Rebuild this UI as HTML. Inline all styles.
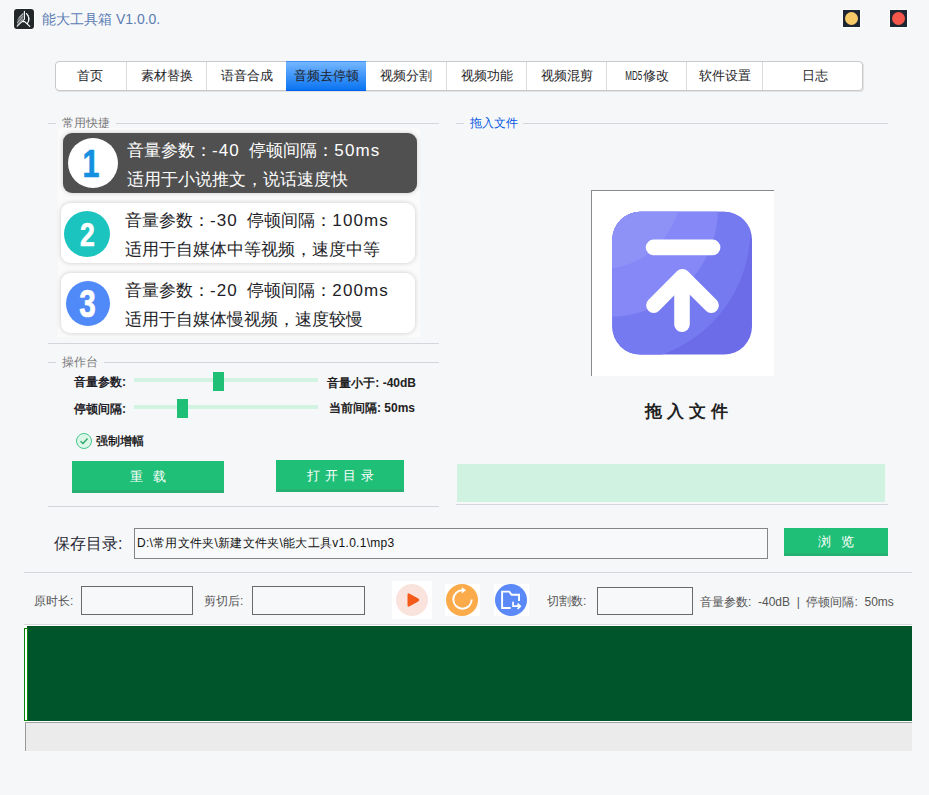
<!DOCTYPE html>
<html><head><meta charset="utf-8">
<style>
*{margin:0;padding:0;box-sizing:border-box}
html,body{width:929px;height:795px;overflow:hidden;background:#f6f7f9;font-family:"Liberation Sans",sans-serif;color:#1e1e28}
.a{position:absolute;white-space:nowrap}
.logo{left:14px;top:9px;width:20px;height:20px;background:#22282a;border-radius:3px;box-shadow:0 0 0 1px #fff}
.title{left:42px;top:10px;font-size:14px;line-height:18px;color:#5b7db3}
.wbtn{top:10px;width:17px;height:17px;background:#1e2634;box-shadow:0 0 0 1px #fff}
.wbtn i{position:absolute;left:2px;top:2px;width:13px;height:13px;border-radius:50%}
.tabs{left:55px;top:61px;width:808px;height:30px;background:#fff;border:1px solid #c9c9c9;border-radius:4px;overflow:hidden;box-shadow:1px 1px 0 #e2e2e2}
.tab{position:absolute;top:0;height:28px;font-size:13px;line-height:28px;text-align:center;border-left:1px solid #dcdcdc}
.tab.act{background:linear-gradient(#72b4ff,#0b73ef);border-left:none}
.sec{height:1px;background:#d3d6dd}
.sl{font-size:12px;line-height:14px;color:#7a7a7a;background:#f6f7f9;padding:0 6px}
.cards{left:58px;top:128px;width:362px;height:209px;background:#fbfbfb}
.card{position:absolute;width:354px;height:60px;border-radius:9px;background:#fff;box-shadow:0 0 5px rgba(0,0,0,.2)}
.card .c{position:absolute;border-radius:50%;text-align:center;font-weight:bold;color:#fff}
.card .t{position:absolute;font-size:17px;line-height:20px;white-space:nowrap}
.card .c b{display:inline-block;transform:scaleX(.78);-webkit-text-stroke:.7px currentColor}
.L{letter-spacing:1.1px}
.btn{background:#20bf78;color:#fff;font-size:13px;line-height:31px;text-align:center;box-shadow:inset 0 -3px 0 #27b073}
.lab{font-size:12px;line-height:14px;color:#555}
.box{height:28px;border:1px solid #6a6a6a;background:#f7f8fa}
</style></head><body>
<div class="a logo"></div>
<svg class="a" style="left:14px;top:9px" width="20" height="20" viewBox="0 0 20 20" fill="none" stroke="#fff" stroke-linecap="round">
  <path d="M10.4 2.2 V10.3 L3.2 17.2" stroke-width="1.1"/>
  <path d="M8.6 12.6 H10.6 L15.8 17.4" stroke-width="1.1"/>
  <path d="M4 10.2 L9 5.2 M3.6 12 L9 6.8 M3.4 13.6 L9 8.4 M3.6 15 L8.6 10.2 M5.2 8.2 L9 4.4" stroke-width=".8" opacity=".85"/>
  <path d="M12.4 4.5 Q16.6 8.6 13.4 14.6" stroke-width="1.1"/>
  <path d="M14.2 6.2 Q16.4 9.6 14.6 13" stroke-width=".7" opacity=".8"/>
</svg>
<div class="a title">能大工具箱 V1.0.0.</div>
<div class="a wbtn" style="left:843px"><i style="background:#f9cb68"></i></div>
<div class="a wbtn" style="left:890px"><i style="background:#f4574a"></i></div>

<div class="a tabs">
  <div class="tab" style="left:0;width:70px;border-left:none;text-indent:-2px">首页</div>
  <div class="tab" style="left:70px;width:80px">素材替换</div>
  <div class="tab" style="left:150px;width:80px">语音合成</div>
  
  <div class="tab" style="left:310px;width:80px;border-left:none">视频分割</div>
  <div class="tab" style="left:390px;width:80px">视频功能</div>
  <div class="tab" style="left:470px;width:80px">视频混剪</div>
  <div class="tab" style="left:550px;width:80px"><span style="display:inline-block;transform:scaleX(.62);margin:0 -5px 0 -4px">MD5</span>修改</div>
  <div class="tab" style="left:630px;width:76px">软件设置</div>
  <div class="tab" style="left:706px;width:101px;text-indent:3px">日志</div>
</div>

<div class="a" style="left:286px;top:61px;width:80px;height:30px;background:linear-gradient(#74b6ff,#0a74f2);border-top:1px solid #3b90f8;border-bottom:1px solid #0060ee;font-size:13px;line-height:28px;text-align:center">音频去停顿</div>
<!-- left section: 常用快捷 -->
<div class="a sec" style="left:48px;top:123px;width:391px"></div>
<div class="a sl" style="left:56px;top:116px">常用快捷</div>
<div class="a cards"></div>
<div class="a card" style="left:63px;top:133px;background:#505050;color:#fff">
  <div class="c" style="left:5px;top:5px;width:50px;height:50px;background:#fff;color:#1590e0;font-size:39px;line-height:52px;text-indent:-2px"><b>1</b></div>
  <div class="t" style="left:64px;top:8px">音量参数：<span class="L">-40</span>&nbsp; 停顿间隔：<span class="L">50ms</span></div>
  <div class="t" style="left:64px;top:37px">适用于小说推文，说话速度快</div>
</div>
<div class="a card" style="left:61px;top:203px">
  <div class="c" style="left:3px;top:8px;width:46px;height:46px;background:#1cc4bf;font-size:34px;line-height:46px"><b>2</b></div>
  <div class="t" style="left:64px;top:8px">音量参数：<span class="L">-30</span>&nbsp; 停顿间隔：<span class="L">100ms</span></div>
  <div class="t" style="left:64px;top:37px">适用于自媒体中等视频，速度中等</div>
</div>
<div class="a card" style="left:61px;top:273px">
  <div class="c" style="left:5px;top:8px;width:44px;height:45px;background:#4f8af8;font-size:38px;line-height:46px"><b>3</b></div>
  <div class="t" style="left:64px;top:8px">音量参数：<span class="L">-20</span>&nbsp; 停顿间隔：<span class="L">200ms</span></div>
  <div class="t" style="left:64px;top:37px">适用于自媒体慢视频，速度较慢</div>
</div>
<div class="a sec" style="left:48px;top:343px;width:391px"></div>

<!-- 操作台 -->
<div class="a sec" style="left:48px;top:362px;width:391px"></div>
<div class="a sl" style="left:56px;top:355px">操作台</div>
<div class="a" style="left:74px;top:375px;font-size:12px;line-height:14px;font-weight:bold">音量参数:</div>
<div class="a" style="left:134px;top:378px;width:184px;height:4px;background:#d2f2e2"></div>
<div class="a" style="left:213px;top:372px;width:11px;height:19px;background:#1fbf75"></div>
<div class="a" style="right:513px;top:376px;font-size:12px;line-height:14px;font-weight:bold;color:#222">音量小于: -40dB</div>
<div class="a" style="left:74px;top:402px;font-size:12px;line-height:14px;font-weight:bold">停顿间隔:</div>
<div class="a" style="left:134px;top:405px;width:184px;height:4px;background:#d2f2e2"></div>
<div class="a" style="left:177px;top:399px;width:11px;height:19px;background:#1fbf75"></div>
<div class="a" style="right:514px;top:401px;font-size:12px;line-height:14px;font-weight:bold;color:#222">当前间隔: 50ms</div>
<div class="a" style="left:76px;top:433px;width:16px;height:16px;border-radius:50%;border:1px solid #46c98e;background:#dcf6e8"></div>
<svg class="a" style="left:76px;top:433px" width="16" height="16"><path d="M4.5 8.2 L7 10.5 L11.5 5.5" fill="none" stroke="#2aa86a" stroke-width="1.4"/></svg>
<div class="a" style="left:96px;top:434px;font-size:12px;line-height:15px;color:#000;-webkit-text-stroke:.25px #000">强制增幅</div>
<div class="a btn" style="left:72px;top:461px;width:152px;height:32px">重&nbsp;&nbsp;&nbsp;载</div>
<div class="a btn" style="left:276px;top:460px;width:128px;height:32px;letter-spacing:5px;text-indent:5px">打开目录</div>
<div class="a sec" style="left:48px;top:506px;width:391px"></div>

<!-- right: 拖入文件 -->
<div class="a sec" style="left:456px;top:123px;width:432px"></div>
<div class="a sl" style="left:464px;top:116px;color:#0657e0;padding-right:5px">拖入文件</div>
<div class="a" style="left:591px;top:190px;width:183px;height:186px;background:#fff;border-top:1px solid #8a8a8a;border-left:1px solid #8a8a8a"></div>
<svg class="a" style="left:612px;top:211px" width="141" height="144" viewBox="0 0 141 144">
  <defs><clipPath id="rr"><rect x="0.3" y="0.8" width="139.7" height="142.8" rx="28"/></clipPath></defs>
  <g clip-path="url(#rr)">
    <rect width="141" height="144" fill="#6c6ce8"/>
    <circle cx="5" cy="18" r="133.5" fill="#757af1"/>
    <circle cx="-2.5" cy="-2.7" r="108.5" fill="#8588f6"/>
    <circle cx="-11" cy="-22" r="80" fill="#8e92f7"/>
  </g>
  <line x1="41.6" y1="36.4" x2="100.6" y2="36.4" stroke="#fff" stroke-width="15.6" stroke-linecap="round"/>
  <path d="M41.7 94.3 L70.3 65.5 L99.3 94.3" fill="none" stroke="#fff" stroke-width="15.2" stroke-linecap="round" stroke-linejoin="round"/>
  <line x1="70" y1="70" x2="70" y2="113.2" stroke="#fff" stroke-width="15.6" stroke-linecap="round"/>
</svg>
<div class="a" style="left:645px;top:401px;font-size:17px;line-height:21px;font-family:'Liberation Serif',serif;font-weight:bold;letter-spacing:5px;color:#222">拖入文件</div>
<div class="a" style="left:457px;top:464px;width:428px;height:38px;background:#d0f2e0"></div>
<div class="a sec" style="left:456px;top:504px;width:432px"></div>

<!-- save dir -->
<div class="a" style="left:54px;top:534px;font-size:16px;line-height:20px;color:#2a2a36">保存目录:</div>
<div class="a" style="left:134px;top:528px;width:634px;height:31px;border:1px solid #858585;background:#f8f9fa;font-size:12px;line-height:29px;padding-left:2px;letter-spacing:.28px;color:#111">D:\常用文件夹\新建文件夹\能大工具v1.0.1\mp3</div>
<div class="a btn" style="left:784px;top:528px;width:104px;height:28px;letter-spacing:10px;text-indent:10px;line-height:27px">浏览</div>
<div class="a sec" style="left:24px;top:572px;width:888px"></div>

<!-- row 3 -->
<div class="a lab" style="left:34px;top:594px">原时长:</div>
<div class="a box" style="left:81px;top:586px;width:112px;height:29px"></div>
<div class="a lab" style="left:204px;top:594px">剪切后:</div>
<div class="a box" style="left:252px;top:586px;width:113px;height:29px"></div>
<div class="a" style="left:392px;top:581px;width:40px;height:38px;background:#fff"></div>
<div class="a" style="left:396px;top:584px;width:32px;height:32px;border-radius:50%;background:#f9e3dc"></div>
<svg class="a" style="left:404px;top:591px" width="18" height="18"><path d="M3.5 4 Q3.5 1.6 5.6 2.7 L14.3 7.6 Q16.2 9 14.3 10.4 L5.6 15.3 Q3.5 16.4 3.5 14 Z" fill="#f55a1a"/></svg>
<div class="a" style="left:445px;top:584px;width:35px;height:32px;background:#fff"></div>
<div class="a" style="left:446px;top:584px;width:32px;height:32px;border-radius:50%;background:#fbab4a"></div>
<svg class="a" style="left:446px;top:584px" width="32" height="32"><path d="M16.5 6.3 A9.2 9.2 0 1 0 25.7 15.5" fill="none" stroke="#fff" stroke-width="1.9"/><path d="M15.8 3 L20 6.3 L15.8 9.6 Z" fill="#fff"/></svg>
<div class="a" style="left:494px;top:584px;width:35px;height:32px;background:#fff"></div>
<div class="a" style="left:495px;top:584px;width:32px;height:32px;border-radius:50%;background:#5b8af8"></div>
<svg class="a" style="left:495px;top:584px" width="32" height="32"><path d="M15.7 24 H7.1 V7.6 H14.25 L16.6 10.7 H24.05 V17" fill="none" stroke="#fff" stroke-width="1.9"/><path d="M18.1 17.8 V22.2 H25 M22.6 19.6 L25.2 22.2 L22.6 24.8" fill="none" stroke="#fff" stroke-width="1.8"/></svg>
<div class="a lab" style="left:547px;top:594px">切割数:</div>
<div class="a box" style="left:597px;top:587px;width:96px"></div>
<div class="a lab" style="left:700px;top:595px">音量参数:&nbsp; -40dB&nbsp; |&nbsp; 停顿间隔:&nbsp; 50ms</div>

<!-- bottom -->
<div class="a" style="left:24px;top:624px;width:888px;height:1px;background:#d8d8de"></div>
<div class="a" style="left:24px;top:625px;width:888px;height:1px;background:#fff"></div>
<div class="a" style="left:24px;top:626px;width:3px;height:2px;background:#fff"></div>
<div class="a" style="left:27px;top:626px;width:885px;height:95px;background:#01552a"></div>
<div class="a" style="left:24px;top:628px;width:4px;height:93px;background:#fff;border:1px solid #0a860a"></div>
<div class="a" style="left:24px;top:721px;width:888px;height:1px;background:#fff"></div>
<div class="a" style="left:25px;top:722px;width:887px;height:1px;background:#a2a2a2"></div>
<div class="a" style="left:25px;top:723px;width:887px;height:28px;background:#ebebeb;border-left:1px solid #9a9a9a"></div>
</body></html>
